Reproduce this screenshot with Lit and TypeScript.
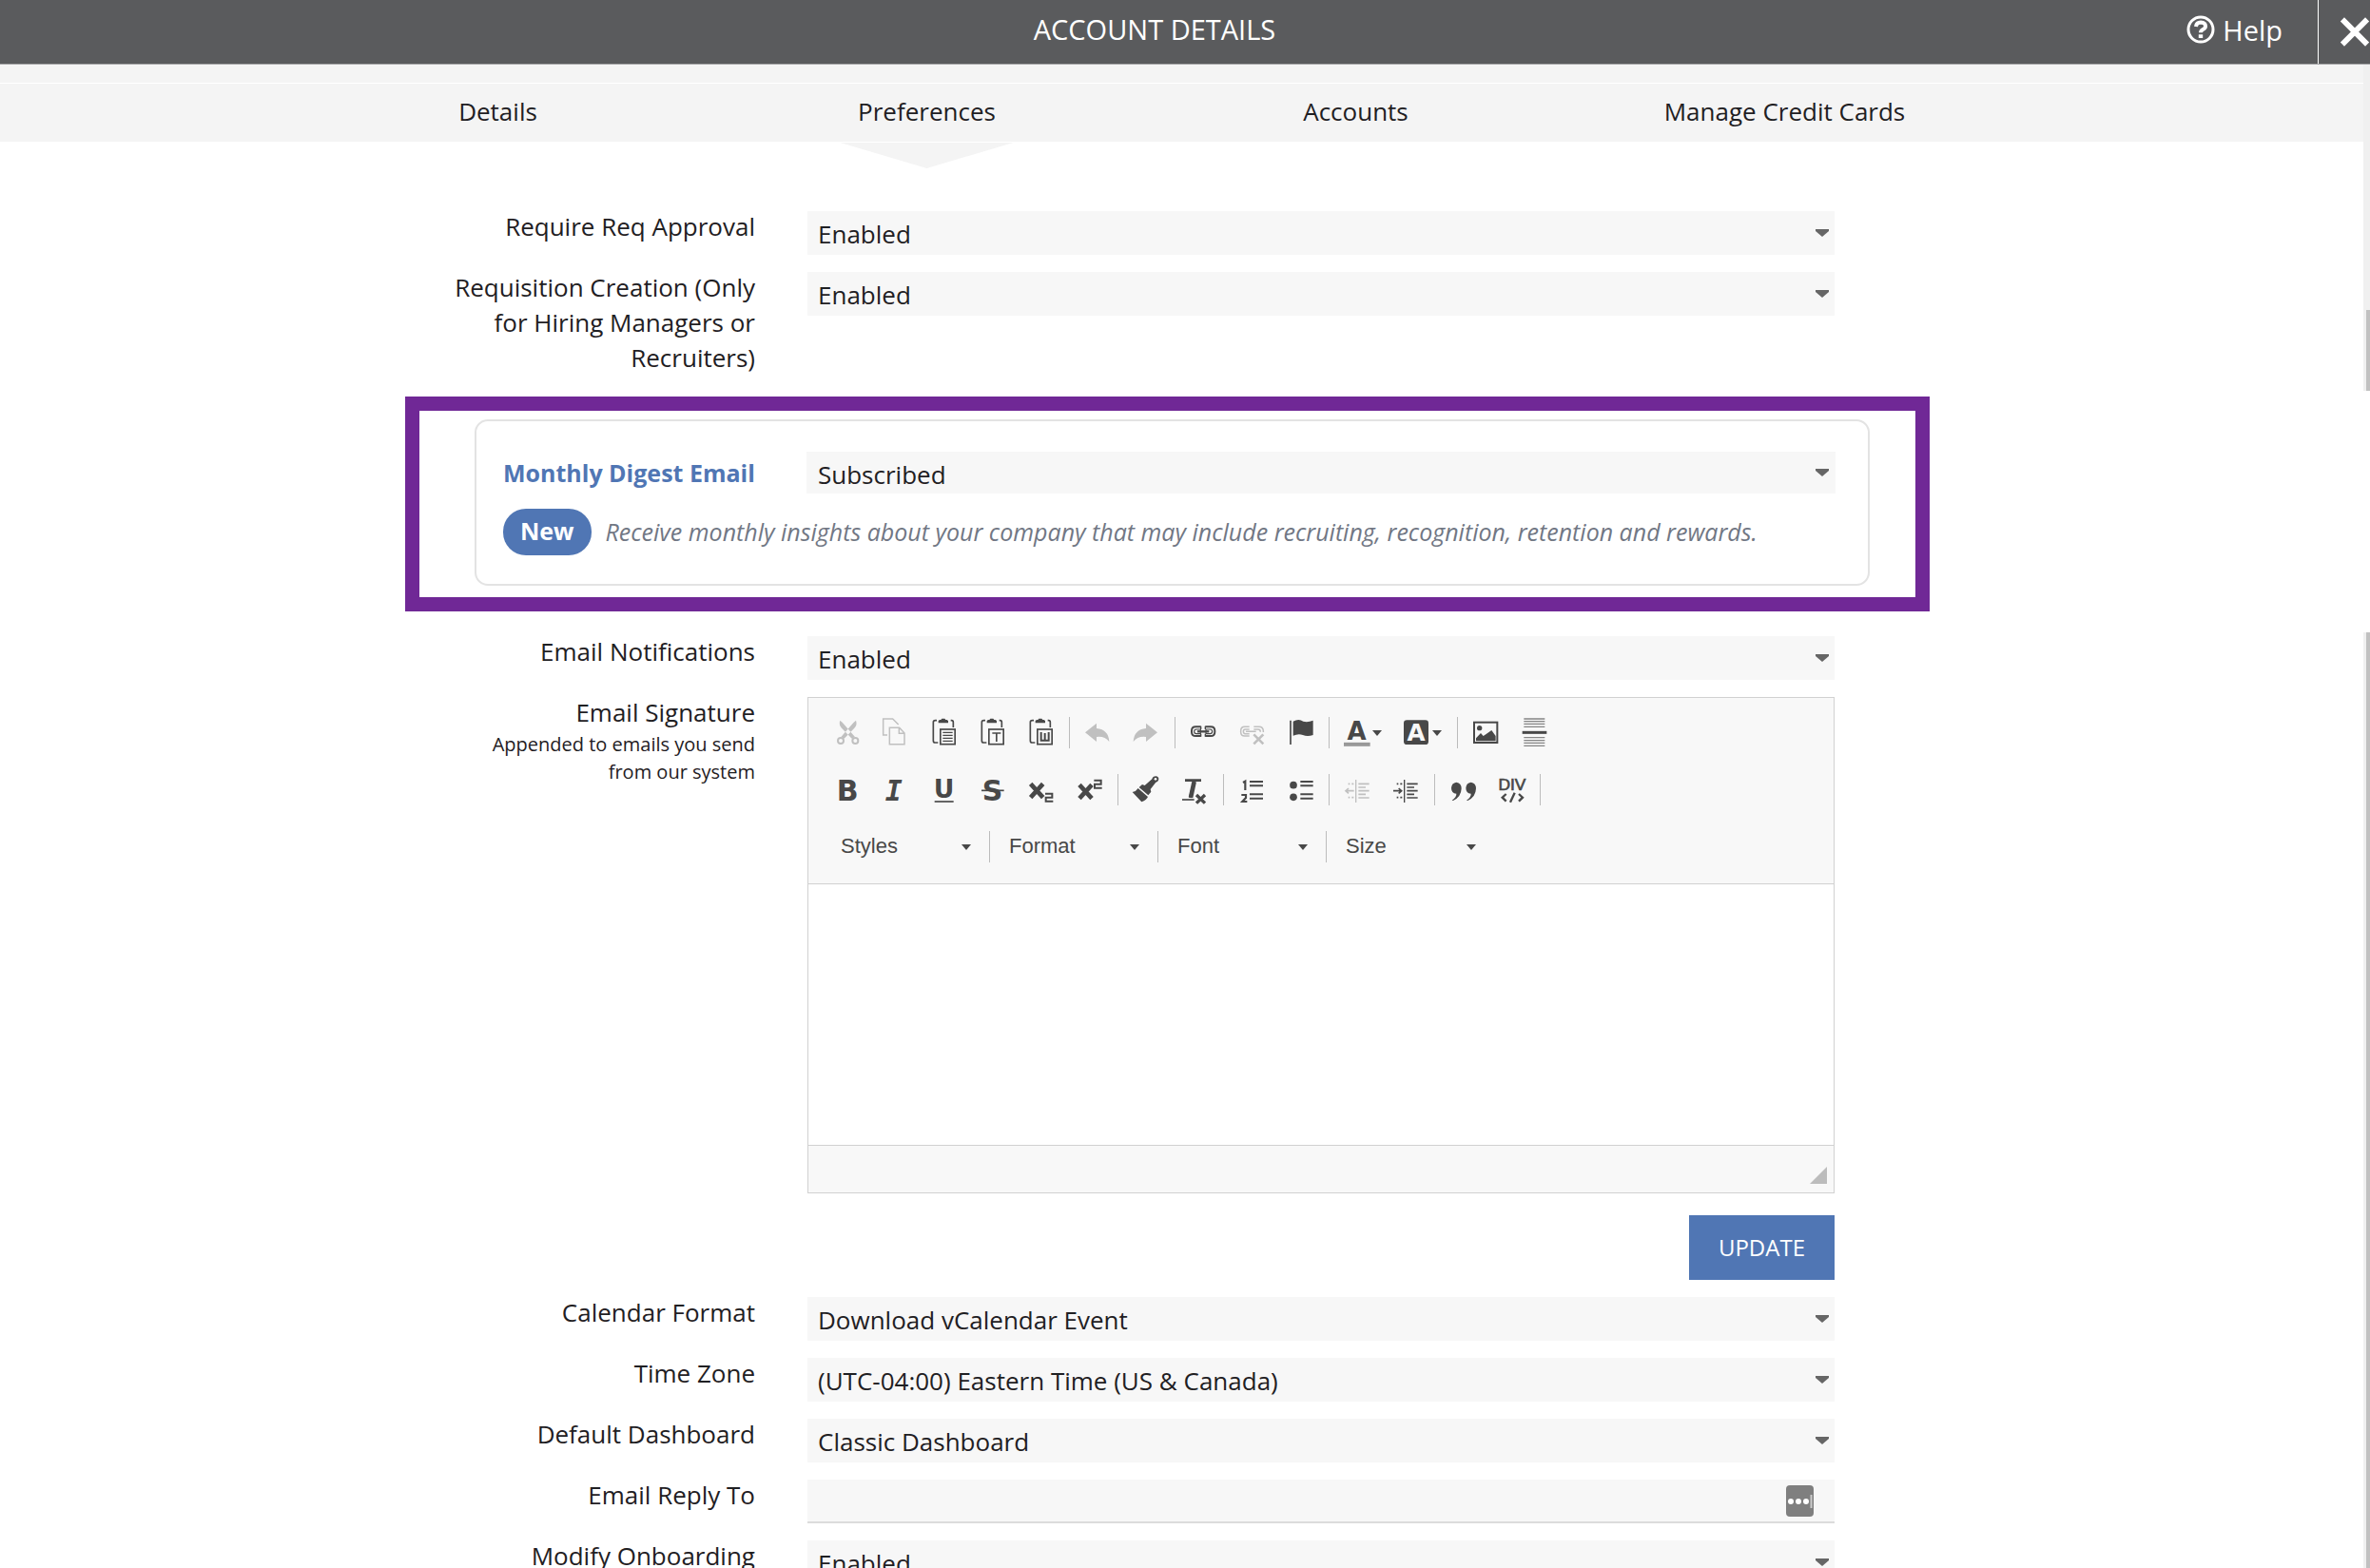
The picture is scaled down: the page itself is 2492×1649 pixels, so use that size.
import { LitElement, html, svg, css, nothing, TemplateResult, SVGTemplateResult } from "lit";
import { customElement } from "lit/decorators.js";

interface Tool {
  label: string;
  /** top-left corner of the icon's 84x99 drawing area */
  x: number;
  y: number;
  art: SVGTemplateResult;
  disabled?: boolean;
  menu?: boolean;
}

const clipboard = (dx: number) => svg`
  <g transform="translate(${dx} 0)">
    <path d="M436 83h-5q-6 0-6 6v57q0 7 6 7h9M480 83h3q5 0 5 6v16" fill="none" stroke="currentColor" stroke-width="5"/>
    <path d="M441 91v-7l4-3h4l3-4h9l3 4h4l4 3v7z" fill="currentColor"/>
    <rect x="447.500" y="111" width="46" height="47" fill="none" stroke="currentColor" stroke-width="5"/>
  </g>`;

const chain = svg`
  <path d="M99 103H83q-13 0-13 13v3q0 13 13 13h16M113 103h17q13 0 13 13v3q0 13-13 13h-17" fill="none" stroke="currentColor" stroke-width="6"/>
  <path d="M98 111h-13q-7 0-7 7t7 7h13zM115 111h13q7 0 7 7t-7 7h-13z" fill="none" stroke="currentColor" stroke-width="3.500"/>
  <path d="M88 118h37" stroke="currentColor" stroke-width="7"/>
  <path d="M99 101v10M99 125v9M113 101v10M113 125v9" stroke="currentColor" stroke-width="4"/>`;

const SEP = "sep" as const;

const rowOne: (Tool | typeof SEP)[] = [
  { label: "Cut", x: 112, y: 72, disabled: true, art: svg`
      <path d="M131 83q-5 14 5 24l32 33 10-5-40-46zM181 83q5 14-5 24l-32 33-10-5 40-46z" fill="currentColor"/>
      <circle cx="133" cy="147" r="9" fill="none" stroke="currentColor" stroke-width="6"/>
      <circle cx="179" cy="147" r="9" fill="none" stroke="currentColor" stroke-width="6"/>` },
  { label: "Copy", x: 265, y: 72, disabled: true, art: svg`
      <path d="M280 129h-13V78h30l18 18M287 106h31l16 17v35h-47zM317 106v18h17" fill="none" stroke="currentColor" stroke-width="4.500"/>` },
  { label: "Paste", x: 418, y: 72, art: svg`${clipboard(0)}
      <path d="M455 121h31M455 130h31M455 139h31M455 148h31" stroke="currentColor" stroke-width="4"/>` },
  { label: "Paste as plain text", x: 571, y: 72, art: svg`${clipboard(153)}
      <path d="M611 123h27M624.500 123v27" stroke="currentColor" stroke-width="5"/>` },
  { label: "Paste from Word", x: 724, y: 72, art: svg`${clipboard(306)}
      <path d="M765 120v26h24v-26M777 123v23" fill="none" stroke="currentColor" stroke-width="6"/>` },
  SEP,
  { label: "Undo", x: 904, y: 72, disabled: true, art: svg`
      <path d="M904 121l36-29v16q38 4 40 42-14-18-40-15v15z" fill="currentColor"/>` },
  { label: "Redo", x: 1057, y: 72, disabled: true, art: svg`
      <path d="M1132 121l-36-29v16q-38 4-40 42 14-18 40-15v15z" fill="currentColor"/>` },
  SEP,
  { label: "Link", x: 67, y: 72, art: chain },
  { label: "Unlink", x: 220, y: 72, disabled: true, art: svg`
      <path d="M252 103H237q-12 0-12 13v3q0 13 12 13h15M266 103h17q12 0 13 13v4M252 111h-13q-6 0-6 7t6 7h13M266 111h13q8 0 8 8M241 118h32" fill="none" stroke="currentColor" stroke-width="4.500"/>
      <path d="M266 127l30 30M296 127l-30 30" stroke="currentColor" stroke-width="8"/>` },
  { label: "Anchor", x: 373, y: 72, art: svg`
      <path d="M382 83v76" stroke="currentColor" stroke-width="5"/>
      <path d="M390 86q18-10 32 0 14 4 31-3v46q-18 6-32 0-14-6-31 2z" fill="currentColor"/>` },
  SEP,
  { label: "Text color", x: 553, y: 72, menu: true, art: svg`
      <text x="594" y="144" text-anchor="middle" class="glyph" font-size="78">A</text>
      <path d="M553 158.500h83" stroke="#999" stroke-width="12"/>` },
  { label: "Background color", x: 742, y: 72, menu: true, art: svg`
      <rect x="742" y="82" width="78" height="77" rx="10" fill="currentColor"/>
      <text x="781" y="146" text-anchor="middle" class="glyph knock" font-size="74">A</text>` },
  SEP,
  { label: "Image", x: 957, y: 72, art: svg`
      <rect x="960" y="89" width="73" height="64" fill="none" stroke="currentColor" stroke-width="6"/>
      <circle cx="977" cy="107" r="8" fill="currentColor"/>
      <path d="M966 148v-9l15-16 8 9 9-6 17-12 13 18v16z" fill="currentColor"/>` },
  { label: "Insert horizontal line", x: 1109, y: 72, art: svg`
      <path d="M1116 78h66M1116 86h66M1116 94h66M1116 103h66M1116 137h66M1116 146h66M1116 154h66M1116 163h66" stroke="currentColor" stroke-opacity=".65" stroke-width="4"/>
      <path d="M1111 121h77" stroke="currentColor" stroke-width="9"/>` },
];

const indentLines = svg`
  <path d="M741 270v72" stroke="currentColor" stroke-width="4"/>
  <path d="M717 283h5M728 283h6M717 326h5M728 326h6" stroke="currentColor" stroke-width="5"/>
  <path d="M749 283h34M749 294h23M749 305h34M749 316h23M749 327h34" stroke="currentColor" stroke-width="5"/>`;

const rowTwo: (Tool | typeof SEP)[] = [
  { label: "Bold", x: 112, y: 252, art: svg`<text x="120" y="336" class="glyph" font-size="90">B</text>` },
  { label: "Italic", x: 265, y: 252, art: svg`<text x="300" y="336" text-anchor="middle" class="glyph mono" font-size="90">I</text>` },
  { label: "Underline", x: 418, y: 252, art: svg`
      <text x="459" y="328" text-anchor="middle" class="glyph" font-size="80">U</text>
      <path d="M429 339h60" stroke="currentColor" stroke-width="5"/>` },
  { label: "Strikethrough", x: 571, y: 252, art: svg`
      <text x="612" y="336" text-anchor="middle" class="glyph" font-size="90">S</text>
      <path d="M577 304h71" stroke="currentColor" stroke-width="5"/>` },
  { label: "Subscript", x: 724, y: 252, art: svg`
      <path d="M732 283l39 43M771 283l-39 43" stroke="currentColor" stroke-width="14"/>
      <path d="M778 314h22v12h-20v12h23" fill="none" stroke="currentColor" stroke-width="6"/>` },
  { label: "Superscript", x: 877, y: 252, art: svg`
      <path d="M886 286l39 43M925 286l-39 43" stroke="currentColor" stroke-width="14"/>
      <path d="M932 272h22v12h-20v12h23" fill="none" stroke="currentColor" stroke-width="6"/>` },
  SEP,
  { label: "Copy formatting", x: 1054, y: 252, art: svg`
      <path d="M1050 309q12-2 18-12l31 27q-4 10-20 16zM1071 294l10-9 8 3 23-20q2-9 12-9 9 1 9 9-1 9-9 10l-17 22 2 8-9 11z" fill="currentColor"/>
      <circle cx="1123" cy="268" r="4" fill="#f8f8f8"/>` },
  { label: "Remove format", x: 39, y: 252, art: svg`
      <path d="M48 272h51M77 273l-13 54" stroke="currentColor" stroke-width="8"/>
      <path d="M77 276l-11 50" stroke="currentColor" stroke-width="14"/>
      <path d="M39 333h38" stroke="currentColor" stroke-width="5"/>
      <path d="M84 318l27 26M111 318l-27 26" stroke="currentColor" stroke-width="10"/>` },
  SEP,
  { label: "Numbered list", x: 220, y: 252, art: svg`
      <path d="M232 279l7-4v28M227 318h14v9l-11 12h15" fill="none" stroke="currentColor" stroke-width="6.500"/>
      <path d="M253 276h42M253 289h42M253 316h42M253 329h42" stroke="currentColor" stroke-width="6"/>` },
  { label: "Bulleted list", x: 373, y: 252, art: svg`
      <circle cx="391" cy="287" r="11.500" fill="currentColor"/><circle cx="391" cy="325" r="11.500" fill="currentColor"/>
      <path d="M413 276h40M413 289h40M413 316h40M413 329h40" stroke="currentColor" stroke-width="6"/>` },
  SEP,
  { label: "Decrease indent", x: 706, y: 252, disabled: true, art: svg`${indentLines}
      <path d="M735 305h-24M718 297l-9 8 9 8" fill="none" stroke="currentColor" stroke-width="5"/>` },
  { label: "Increase indent", x: 706, y: 252, art: svg`${indentLines}
      <path d="M706 305h24M723 297l9 8-9 8" fill="none" stroke="currentColor" stroke-width="5"/>` },
  SEP,
  { label: "Block quote", x: 885, y: 252, art: svg`
      <path d="M890 335q15-11 14-21-16-2-16-18 1-16 16-18 16 2 16 20-1 27-26 38zM936 335q15-11 14-21-16-2-16-18 1-16 16-18 16 2 16 20-1 27-26 38z" fill="currentColor"/>` },
  { label: "Create div container", x: 1039, y: 252, art: svg`
      <text x="1081" y="302" text-anchor="middle" class="glyph thin" font-size="52">DIV</text>
      <path d="M1062 315l-12 11 12 12M1102 315l12 11-12 12M1089 311l-14 30" fill="none" stroke="currentColor" stroke-width="7"/>` },
  SEP,
];

const caret = html`<svg class="caret" viewBox="0 0 14 8" width="14" height="8" aria-hidden="true"><path d="M0 0h14v2L7 8 0 2z" fill="currentColor"/></svg>`;
const smallCaret = html`<svg class="caret-small" viewBox="0 0 10 6" width="10" height="6" aria-hidden="true"><path d="M0 0h10L5 6z" fill="currentColor"/></svg>`;

@customElement("app-root")
export class AppRoot extends LitElement {
  static styles = css`
    :host {
      display: flex;
      flex-direction: column;
      height: 100vh;
      overflow: hidden;
      background: #fff;
      color: #1f2023;
      font: 26px/37px "Open Sans", "Noto Sans", sans-serif;
    }
    * { box-sizing: border-box; }
    button, select, input { font: inherit; color: inherit; margin: 0; border: 0; border-radius: 0; background: none; }
    a { color: inherit; text-decoration: none; }

    .topbar {
      flex: none;
      display: grid;
      grid-template-columns: 1fr auto 55px;
      height: 68px;
      background: #5a5b5d;
      border-bottom: 1px solid #a9a9ab;
      color: #fff;
    }
    .title {
      grid-area: 1 / 1 / 2 / 3;
      margin: 0;
      padding: 12px 9px 0 0;
      text-align: center;
      font-size: 29px;
      font-weight: 400;
    }
    .help { grid-area: 1 / 2; display: flex; gap: 8px; padding: 13px 37px 0 0; font-size: 29px; }
    .help svg { margin-top: 3px; }
    .close { overflow: hidden; border-left: 1px solid #fff; padding: 0 0 0 22px; display: flex; align-items: center; }

    .main { flex: 1; min-height: 0; display: flex; }
    .page { flex: 1; min-width: 0; overflow: hidden; }
    .spacer { height: 20px; background: #f4f4f4; border-bottom: 1px solid #fff; }
    .tabs { display: grid; grid-template-columns: 298fr 1804fr 383fr; height: 61px; background: #f4f4f4; }
    .tab-list { grid-column: 2; display: grid; grid-template-columns: repeat(4, 1fr); }
    .tab { position: relative; padding-top: 11px; text-align: center; }
    .tab.active::after {
      content: "";
      position: absolute;
      top: 62px;
      left: calc(50% - 91px);
      width: 182px;
      height: 27px;
      background: #f4f4f4;
      clip-path: polygon(0 0, 100% 0, 50% 100%);
    }

    .content { display: grid; grid-template-columns: 298fr 1804fr 383fr; padding-top: 71px; }
    .form { grid-column: 2; display: flex; flex-direction: column; gap: 16px; }
    .row { display: grid; grid-template-columns: 321px 1fr; column-gap: 55px; margin: 0 173px 0 175px; }
    .label { text-align: right; }
    .hint { display: block; font-size: 20px; line-height: 29px; }
    .field { margin-top: 2px; }

    .pick { display: grid; grid-template-columns: 1fr; align-items: center; background: #f7f7f7; }
    .pick select { grid-area: 1 / 1; width: 100%; height: 46px; padding: 2px 40px 0 11px; appearance: none; }
    .caret { grid-area: 1 / 1; justify-self: end; margin-right: 6px; color: #666; pointer-events: none; }

    .highlight { margin: 6px 73px 8px 128px; border: 15px solid #702896; padding: 9px 48px 12px 58px; }
    .card { border: 2px solid #e3e3e3; border-radius: 14px; padding: 32px 34px 30px 28px; }
    .digest { display: grid; grid-template-columns: 319px 1fr; }
    .digest-label { padding-top: 4px; color: #5076b4; font-size: 25px; font-weight: 700; }
    .digest .pick select { height: 44px; padding: 4px 40px 0 12px; }
    .digest .caret { margin-right: 7px; }
    .note { display: flex; align-items: center; gap: 15px; margin: 16px 0 0; color: #717784; font-size: 25px; font-style: italic; }
    .badge { border-radius: 24px; padding: 5px 18px 7px; background: #5076b4; color: #fff; font-style: normal; font-weight: 700; }

    .editor { border: 1px solid #d1d1d1; }
    .toolbar { display: flex; flex-direction: column; gap: 27px; padding: 20px 15px 22px; background: #f8f8f8; border-bottom: 1px solid #d1d1d1; color: #484848; }
    .tool-row { display: flex; height: 33px; }
    .tool { flex: none; display: flex; justify-content: center; width: 51px; padding: 0; }
    .tool.menu { width: 63px; justify-content: flex-start; align-items: center; gap: 2px; padding-left: 11px; }
    .tool:disabled { color: #c0c0c0; }
    .sep { flex: none; width: 9px; border-left: 1px solid #bcbcbc; margin-left: 4px; margin-right: -4px; }
    .glyph { font-family: "DejaVu Sans", sans-serif; font-weight: 700; fill: currentColor; }
    .mono { font-family: "DejaVu Sans Mono", monospace; font-style: italic; }
    .knock { fill: #f8f8f8; }
    .thin { font-family: "Liberation Sans Narrow", "Liberation Sans", sans-serif; font-weight: 400; stroke: currentColor; stroke-width: 2; }
    .combo { display: grid; align-items: center; width: 170px; }
    .combo select { grid-area: 1 / 1; width: 100%; height: 33px; padding: 0 30px 2px 19px; appearance: none; font: 22px/31px "Liberation Sans", sans-serif; }
    .caret-small { color: #484848; pointer-events: none; }
    .combo .caret-small { grid-area: 1 / 1; justify-self: end; margin-right: 14px; }
    .combo-sep { width: 7px; border-left: 1px solid #bcbcbc; margin-left: 5px; margin-right: -5px; }
    .signature { height: 274px; outline: none; }
    .grip { display: flex; justify-content: flex-end; align-items: flex-end; height: 50px; padding: 0 7px 9px; background: #f8f8f8; border-top: 1px solid #d1d1d1; }

    .actions { display: flex; justify-content: flex-end; margin: 7px 173px 0 0; }
    .update { padding: 15px 31px 16px; background: #5076b4; color: #fff; font-size: 24px; }

    .reply { display: grid; align-items: center; background: #f7f7f7; border-bottom: 2px solid #dcdcdc; height: 46px; }
    .reply input { grid-area: 1 / 1; width: 100%; height: 44px; padding: 0 60px 0 11px; }
    .reply svg { grid-area: 1 / 1; justify-self: end; margin-right: 22px; }

    .scroll { flex: none; width: 7px; display: flex; flex-direction: column; }
    .track { height: 258px; background: #f0f0f0; }
    .thumb { height: 85px; background: #c1c1c1; border-left: 3px solid #f0f0f0; }
    .break { height: 254px; }
    .thumb.rest { flex: 1; }
  `;

  private pick(id: string, value: string) {
    return html`<div class="pick"><select id=${id}><option>${value}</option></select>${caret}</div>`;
  }

  private row(id: string, label: string, value: string) {
    return html`<div class="row">
      <label class="label" for=${id}>${label}</label>
      <div class="field">${this.pick(id, value)}</div>
    </div>`;
  }

  private tools(items: (Tool | typeof SEP)[]): TemplateResult {
    return html`<div class="tool-row">${items.map((t) =>
      t === SEP
        ? html`<span class="sep"></span>`
        : html`<button type="button" class="tool ${t.menu ? "menu" : ""}" aria-label=${t.label} ?disabled=${t.disabled ?? false}>
            <svg viewBox="${t.x} ${t.y} 84 99" width="28" height="33" overflow="visible" aria-hidden="true">${t.art}</svg>
            ${t.menu ? smallCaret : nothing}
          </button>`
    )}</div>`;
  }

  private combo(name: string, last = false) {
    return html`<div class="combo">
        <select aria-label=${name}><option>${name}</option></select>${smallCaret}
      </div>${last ? nothing : html`<span class="combo-sep"></span>`}`;
  }

  render() {
    return html`
      <header class="topbar">
        <h1 class="title">ACCOUNT DETAILS</h1>
        <a class="help" href="#help">
          <svg viewBox="0 0 30 30" width="30" height="30" fill="none" stroke="#fff" aria-hidden="true">
            <circle cx="15" cy="15" r="13" stroke-width="3"/>
            <path d="M10 12q.5-4.500 5-4.500 5 .3 5 4 0 2.200-2.700 3.500-2.300 1.200-2.300 3.300" stroke-width="4"/>
            <path d="M12.800 20.200h4.400v3.800h-4.400z" fill="#fff" stroke="none"/>
          </svg>
          <span>Help</span>
        </a>
        <button class="close" type="button" aria-label="Close">
          <svg viewBox="0 0 33 33" width="33" height="33" aria-hidden="true">
            <path d="M3 3l27 27M30 3L3 30" stroke="#fff" stroke-width="6"/>
          </svg>
        </button>
      </header>
      <div class="main">
        <div class="page">
          <div class="spacer"></div>
          <nav class="tabs">
            <div class="tab-list">
              <a class="tab" href="#details">Details</a>
              <a class="tab active" href="#preferences">Preferences</a>
              <a class="tab" href="#accounts">Accounts</a>
              <a class="tab" href="#cards">Manage Credit Cards</a>
            </div>
          </nav>
          <div class="content">
            <form class="form">
              ${this.row("approval", "Require Req Approval", "Enabled")}
              ${this.row("creation", "Requisition Creation (Only for Hiring Managers or Recruiters)", "Enabled")}
              <section class="highlight">
                <div class="card">
                  <div class="digest">
                    <label class="digest-label" for="digest">Monthly Digest Email</label>
                    ${this.pick("digest", "Subscribed")}
                  </div>
                  <p class="note">
                    <span class="badge">New</span>
                    <span>Receive monthly insights about your company that may include recruiting, recognition, retention and rewards.</span>
                  </p>
                </div>
              </section>
              ${this.row("notifications", "Email Notifications", "Enabled")}
              <div class="row">
                <div class="label">
                  <span id="signature-label">Email Signature</span>
                  <span class="hint">Appended to emails you send from our system</span>
                </div>
                <div class="field editor">
                  <div class="toolbar">
                    ${this.tools(rowOne)}
                    ${this.tools(rowTwo)}
                    <div class="tool-row">
                      ${this.combo("Styles")}${this.combo("Format")}${this.combo("Font")}${this.combo("Size", true)}
                    </div>
                  </div>
                  <div class="signature" contenteditable="true" role="textbox" aria-labelledby="signature-label"></div>
                  <div class="grip">
                    <svg viewBox="0 0 18 18" width="18" height="18" aria-hidden="true"><path d="M18 0v18H0z" fill="#bcbcbc"/></svg>
                  </div>
                </div>
              </div>
              <div class="actions"><button class="update" type="button">UPDATE</button></div>
              ${this.row("calendar", "Calendar Format", "Download vCalendar Event")}
              ${this.row("zone", "Time Zone", "(UTC-04:00) Eastern Time (US & Canada)")}
              ${this.row("dashboard", "Default Dashboard", "Classic Dashboard")}
              <div class="row">
                <label class="label" for="reply">Email Reply To</label>
                <div class="field reply">
                  <input id="reply" type="text" />
                  <svg viewBox="0 0 29 33" width="29" height="33" aria-hidden="true">
                    <rect width="29" height="33" rx="4" fill="#7f7f7f"/>
                    <circle cx="5" cy="17" r="3" fill="#fff"/><circle cx="13" cy="17" r="3" fill="#fff"/><circle cx="21" cy="17" r="3" fill="#fff"/>
                    <path d="M26.500 10v14" stroke="#ccc" stroke-width="2"/>
                  </svg>
                </div>
              </div>
              ${this.row("onboarding", "Modify Onboarding", "Enabled")}
            </form>
          </div>
        </div>
        <div class="scroll" aria-hidden="true">
          <div class="track"></div>
          <div class="thumb"></div>
          <div class="break"></div>
          <div class="thumb rest"></div>
        </div>
      </div>
    `;
  }
}
